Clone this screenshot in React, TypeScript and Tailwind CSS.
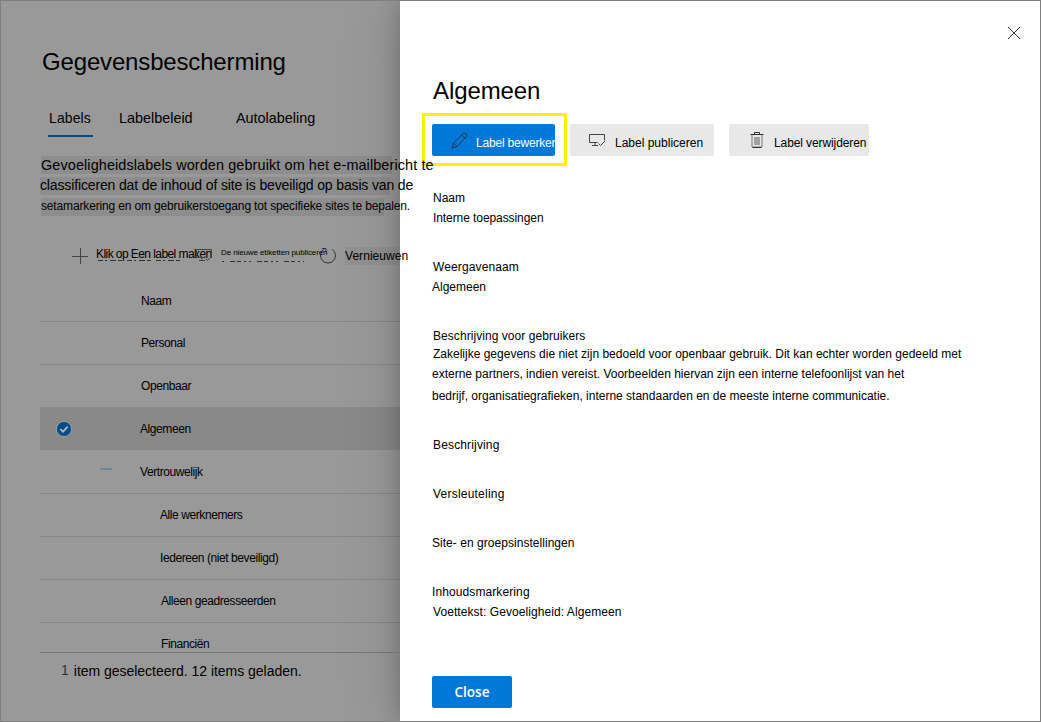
import type { ReactNode } from "react";

function PlusIcon() {
  return (
    <svg className="block h-4 w-4" viewBox="0 0 16 16" stroke="#444" fill="none">
      <path d="M8.500 0v16M0 8.500h16" />
    </svg>
  );
}

function PublishIcon({ className }: { className: string }) {
  return (
    <svg className={className} viewBox="0 0 17 15" stroke="#444" fill="none">
      <path d="M8.500 9.500H.5V1.500h15v6M3 12.500h6M6 9.500v3" />
      <path d="M9.500 10.500l2 2 4.500-4.500" />
    </svg>
  );
}

function PencilIcon() {
  return (
    <svg className="block h-[18px] w-[18px]" viewBox="0 0 18 18" stroke="#263b50" fill="none">
      <path d="M1 16l1.500-5L12 1.700q1.500-1.200 3 .1t.2 3L6 14.500zM2.500 11L6 14.500M10.800 3l3.400 3.300" />
    </svg>
  );
}

function TrashIcon() {
  return (
    <svg className="block h-4 w-[14px]" viewBox="0 0 14 16" fill="none">
      <path d="M4 5h6v8H4z" fill="#a0a0a0" />
      <path d="M2 3v12h10V3" stroke="#777" />
      <path d="M.5 2.500h13M4.500 2.500V.5h5v2M2.500 15.500h9" stroke="#333" />
    </svg>
  );
}

function RefreshIcon() {
  return (
    <svg className="block h-[18px] w-[18px]" viewBox="0 0 18 18" stroke="#333" fill="none">
      <path d="M5 2.200A7.500 7.500 0 1 0 13 2.200M3 1.500h4v4" />
    </svg>
  );
}

function Row({ children, nested, divider = true, offset }: { children: ReactNode; nested?: boolean; divider?: boolean; offset?: boolean }) {
  return (
    <div className={`flex h-[43px] shrink-0 items-center border-b ${divider ? "border-black/12" : "border-transparent"} ${nested ? (offset ? "pl-[121px]" : "pl-[120px]") : offset ? "pl-[101px]" : "pl-[100px]"}`}>
      <span>{children}</span>
    </div>
  );
}

function Field({ label, children }: { label: ReactNode; children?: ReactNode }) {
  return (
    <div className="mb-[29px] leading-[20px]">
      <div>{label}</div>
      {children}
    </div>
  );
}

function Background() {
  return (
    <main className="relative z-10 flex h-[720px] w-[399px] shrink-0 flex-col whitespace-nowrap">
      <h1 className="mt-[46px] ml-[41px] h-[30px] text-[24px] leading-[30px] tracking-[-0.16px]">Gegevensbescherming</h1>

      <nav className="mt-[29px] ml-[47px] flex h-[31px] text-[14.4px] leading-[24px]">
        <div className="h-[31px] w-[45px] border-b-2 border-[#004c87] pl-px text-[14px] tracking-[0.1px]">Labels</div>
        <div className="ml-[26px] w-[117px]">Labelbeleid</div>
        <div>Autolabeling</div>
      </nav>

      <div className="mt-[19px] ml-[39px] flex flex-col gap-[3px]">
        <div className="ml-px h-[18px] w-[351px] bg-black/8 text-[14.4px] leading-[19px] tracking-[0.12px]">
          Gevoeligheidslabels worden gebruikt om het e-mailbericht te
        </div>
        <div className="h-[18px] w-[350px] bg-black/8 text-[14px] leading-[17px] tracking-[-0.14px]">
          classificeren dat de inhoud of site is beveiligd op basis van de
        </div>
        <div className="ml-px h-[18px] w-[343px] bg-black/8 text-[12px] leading-[17px] tracking-[-0.15px]">
          setamarkering en om gebruikerstoegang tot specifieke sites te bepalen.
        </div>
      </div>

      <div className="mt-[27px] ml-[71px] flex h-[26px] items-center text-[12px]">
        <PlusIcon />
        <div className="relative ml-[8px] w-[125px] tracking-[-0.57px]">
          <span className="relative -top-[2px]">Klik op Een label maken</span>
          <svg className="absolute top-[13px] left-[2px] h-[2px] w-[82px]" viewBox="0 0 82 2" stroke="#333">
            <path d="M0 .5h82" strokeDasharray="5 2 2 3 6 2 4 5" />
          </svg>
          <PublishIcon className="absolute top-[1px] left-[100px] h-[15px] w-[17px]" />
        </div>
        <div className="relative w-[98px] text-[8px] tracking-[-0.1px]">
          <span className="relative -top-[3px]">De nieuwe etiketten publiceren</span>
          <svg className="absolute top-[11px] left-[1px] h-[2px] w-[82px]" viewBox="0 0 82 2" stroke="#333">
            <path d="M0 .5h82" strokeDasharray="2 6 5 2 4 3 2 3" />
          </svg>
        </div>
        <RefreshIcon />
        <div className="ml-[8px] h-[18px] w-[54px] bg-black/5 leading-[18px] tracking-[0.05px]">Vernieuwen</div>
      </div>

      <div className="mt-[10px] ml-[39px] flex h-[374px] shrink-0 flex-col overflow-hidden border-b border-[#747474] text-[12px] tracking-[-0.42px]">
        <div className="flex h-[43px] shrink-0 items-center border-b border-black/12 pt-[2px] pl-[101px]">Naam</div>
        <Row offset>Personal</Row>
        <Row divider={false} offset>Openbaar</Row>
        <div className="-mt-px flex h-[43px] shrink-0 items-center bg-black/10 pl-[16px]">
          <svg className="h-4 w-4" viewBox="0 0 16 16" fill="none">
            <circle cx="8" cy="8" r="7.600" fill="#004c87" stroke="#aaa" strokeWidth=".8" />
            <path d="M4.300 8l2.700 2.700 4.700-5" stroke="#bbb" strokeWidth="1.700" />
          </svg>
          <span className="ml-[68px]">Algemeen</span>
        </div>
        <div className="flex h-[44px] shrink-0 items-center border-b border-black/12 pl-[60px]">
          <div className="mb-[5px] h-[2px] w-[12px] bg-[#6b8796]" />
          <span className="ml-[28px]">Vertrouwelijk</span>
        </div>
        <Row nested>Alle werknemers</Row>
        <Row nested>Iedereen (niet beveiligd)</Row>
        <Row nested offset>Alleen geadresseerden</Row>
        <Row nested offset>Financiën</Row>
      </div>

      <footer className="mt-[7px] ml-[60px] flex gap-[5px] text-[14px] leading-[22px]">
        <span className="-mt-px text-[#333]">1</span>
        <span className="tracking-[-0.03px]">item geselecteerd. 12 items geladen.</span>
      </footer>
    </main>
  );
}

function DetailPanel() {
  return (
    <aside className="flex h-[720px] w-[640px] shrink-0 flex-col bg-white pl-[32px] text-[12px] shadow-[0_0_58px_rgba(0,0,0,0.16),0_0_20px_rgba(0,0,0,0.2)]">
      <div className="flex h-[74px] shrink-0 justify-end pt-[25px] pr-[19px]">
        <svg className="h-[14px] w-[14px]" viewBox="0 0 14 14" stroke="#333" fill="none">
          <path d="M1 1l12 12M13 1L1 13" />
        </svg>
      </div>
      <h2 className="h-[38px] pl-px text-[24px] leading-[32px] tracking-[-0.1px]">Algemeen</h2>

      <div className="-ml-[10px] flex h-[53px] w-[460px] items-center whitespace-nowrap">
        <div className="flex h-[53px] w-[145px] shrink-0 items-center border-[3px] border-[#fff100] pl-[7px]">
          <button className="flex h-8 w-[123px] items-center overflow-hidden rounded-[2px] bg-[#0078d7] pl-[19px] text-white">
            <span className="mt-[2px] shrink-0"><PencilIcon /></span>
            <span className="mt-[7px] ml-[7px] tracking-[-0.2px]">Label bewerken</span>
          </button>
        </div>
        <button className="ml-[3px] flex h-8 w-[144px] shrink-0 items-center rounded-[2px] bg-[#e8e8e8] pl-[19px]">
          <PublishIcon className="mt-px h-[15px] w-[17px]" />
          <span className="mt-[7px] ml-[9px]">Label publiceren</span>
        </button>
        <button className="ml-[15px] flex h-8 w-[140px] shrink-0 items-center rounded-[2px] bg-[#e8e8e8] pl-[21px]">
          <TrashIcon />
          <span className="mt-[7px] ml-[10px] tracking-[-0.1px]">Label verwijderen</span>
        </button>
      </div>

      <div className="mt-[22px] pl-px whitespace-nowrap">
        <Field label="Naam"><div className="tracking-[-0.08px]">Interne toepassingen</div></Field>
        <Field label={<span className="tracking-[0.12px]">Weergavenaam</span>}><div className="-ml-px">Algemeen</div></Field>
        <Field label={<span className="tracking-[0.06px]">Beschrijving voor gebruikers</span>}>
          <div className="-mt-px leading-[18px]">Zakelijke gegevens die niet zijn bedoeld voor openbaar gebruik. Dit kan echter worden gedeeld met</div>
          <div className="-ml-px leading-[22px]">externe partners, indien vereist. Voorbeelden hiervan zijn een interne telefoonlijst van het</div>
          <div className="-ml-px h-[21px] leading-[23px]">bedrijf, organisatiegrafieken, interne standaarden en de meeste interne communicatie.</div>
        </Field>
        <Field label={<span className="tracking-[0.15px]">Beschrijving</span>} />
        <Field label={<span className="tracking-[0.22px]">Versleuteling</span>} />
        <Field label={<span className="-ml-px tracking-[0.04px]">Site- en groepsinstellingen</span>} />
        <Field label={<span className="-ml-px tracking-[0.1px]">Inhoudsmarkering</span>}><div className="tracking-[0.07px]">Voettekst: Gevoeligheid: Algemeen</div></Field>
      </div>

      <button className="mt-[25px] h-8 w-20 shrink-0 rounded-[2px] bg-[#0078d7] pt-px font-['Open_Sans',sans-serif] text-[13.500px] font-semibold text-white">Close</button>
    </aside>
  );
}

export default function App() {
  return (
    <div className="flex h-[722px] w-[1041px] overflow-hidden border border-[#7f7f7f] bg-[#999] font-['Liberation_Sans',Arial,sans-serif] text-black">
      <Background />
      <DetailPanel />
    </div>
  );
}
